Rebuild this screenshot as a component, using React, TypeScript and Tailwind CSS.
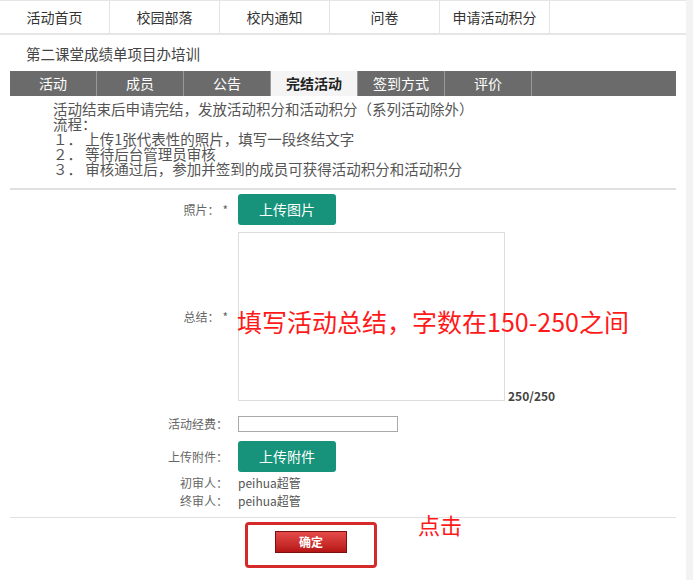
import React from "react";

const FONT = { fontFamily: '"Noto Sans CJK SC", "Liberation Sans", sans-serif' };

const TOP_TABS = ["活动首页", "校园部落", "校内通知", "问卷", "申请活动积分"];
const SUB_TABS = ["活动", "成员", "公告", "完结活动", "签到方式", "评价"];

function Label({ text, star }: { text: string; star?: boolean }) {
  return (
    <div className="w-[230px] shrink-0 pr-[2px] text-right text-[12px] text-[#666]">
      {text}
      {star && <span className="ml-[3px]">*</span>}
    </div>
  );
}

export default function App() {
  return (
    <div className="flex min-h-[580px] w-[693px] bg-[#f3f3f3]" style={FONT}>
      <div className="relative w-[686px] bg-white">
        {/* top nav */}
        <div className="flex h-[35px] border-b-2 border-t border-[#e6e6e6]">
          {TOP_TABS.map((t) => (
            <div
              key={t}
              className="flex w-[110px] items-center justify-center border-r border-[#e3e3e3] text-[14px] text-[#333]"
            >
              {t}
            </div>
          ))}
        </div>

        <div className="flex h-[36px] items-center pl-[26px] pt-[1px] text-[14.5px] text-[#444]">
          第二课堂成绩单项目办培训
        </div>

        {/* sub tabs */}
        <div className="mx-[10px] flex h-[25px] bg-[#6b6b6b]">
          {SUB_TABS.map((t) => (
            <div
              key={t}
              className={
                t === "完结活动"
                  ? "flex w-[87px] items-center justify-center border-r border-[#999] bg-[#f4f4f4] text-[14px] font-bold text-[#222]"
                  : "flex w-[87px] items-center justify-center border-r border-[#999] text-[14px] text-white"
              }
            >
              {t}
            </div>
          ))}
        </div>

        {/* description */}
        <div className="pl-[53px] pt-[5px] text-[14.5px] leading-[15px] text-[#555]">
          <div>活动结束后申请完结，发放活动积分和活动积分（系列活动除外）</div>
          <div>流程：</div>
          <div>１．&nbsp;上传1张代表性的照片，填写一段终结文字</div>
          <div>２．&nbsp;等待后台管理员审核</div>
          <div>３．&nbsp;审核通过后，参加并签到的成员可获得活动积分和活动积分</div>
        </div>

        <div className="mx-[10px] mt-[12px] border-b-2 border-[#e0e0e0]" />

        {/* form */}
        <div className="mt-[4px] flex items-center">
          <Label text="照片：" star />
          <button className="ml-[8px] h-[31px] w-[98px] rounded-[3px] bg-[#17937b] text-[14px] text-white">
            上传图片
          </button>
        </div>

        <div className="mt-[7px] flex items-center">
          <Label text="总结：" star />
          <div className="ml-[8px] flex items-end">
            <div className="h-[169px] w-[267px] border border-[#dcdcdc] bg-white" />
            <div className="mb-[-4px] ml-[3px] text-[12px] font-bold text-[#444]">250/250</div>
          </div>
        </div>

        <div className="mt-[14px] flex items-center">
          <Label text="活动经费：" />
          <div className="ml-[8px] h-[16px] w-[160px] border border-[#a9a9a9]" />
        </div>

        <div className="mt-[8px] flex items-center">
          <Label text="上传附件：" />
          <button className="ml-[8px] h-[31px] w-[98px] rounded-[3px] bg-[#17937b] text-[14px] text-white">
            上传附件
          </button>
        </div>

        <div className="mt-[2px] flex items-center leading-[18px]">
          <Label text="初审人：" />
          <div className="ml-[8px] text-[12px] text-[#555]">peihua超管</div>
        </div>
        <div className="flex items-center leading-[18px]">
          <Label text="终审人：" />
          <div className="ml-[8px] text-[12px] text-[#555]">peihua超管</div>
        </div>

        <div className="mx-[10px] mt-[7px] border-b border-[#e0e0e0]" />

        <div className="flex items-start">
          <div className="ml-[245px] mt-[4px] flex h-[46px] w-[132px] items-start justify-center rounded-[4px] border-[3px] border-[#d42a2a] pt-[6px]">
            <button className="h-[22px] w-[72px] border border-[#7a1010] bg-gradient-to-b from-[#e64a4a] to-[#b51414] text-[12px] font-bold text-white">
              确定
            </button>
          </div>
          <div className="ml-[41px] mt-[-10px] text-[22px] text-[#ff1a1a]">点击</div>
        </div>

        {/* annotation */}
        <div className="absolute left-[237px] top-[304px] text-[25px] leading-[34px] text-[#ff1a1a]">
          填写活动总结，字数在150-250之间
        </div>
      </div>
    </div>
  );
}
